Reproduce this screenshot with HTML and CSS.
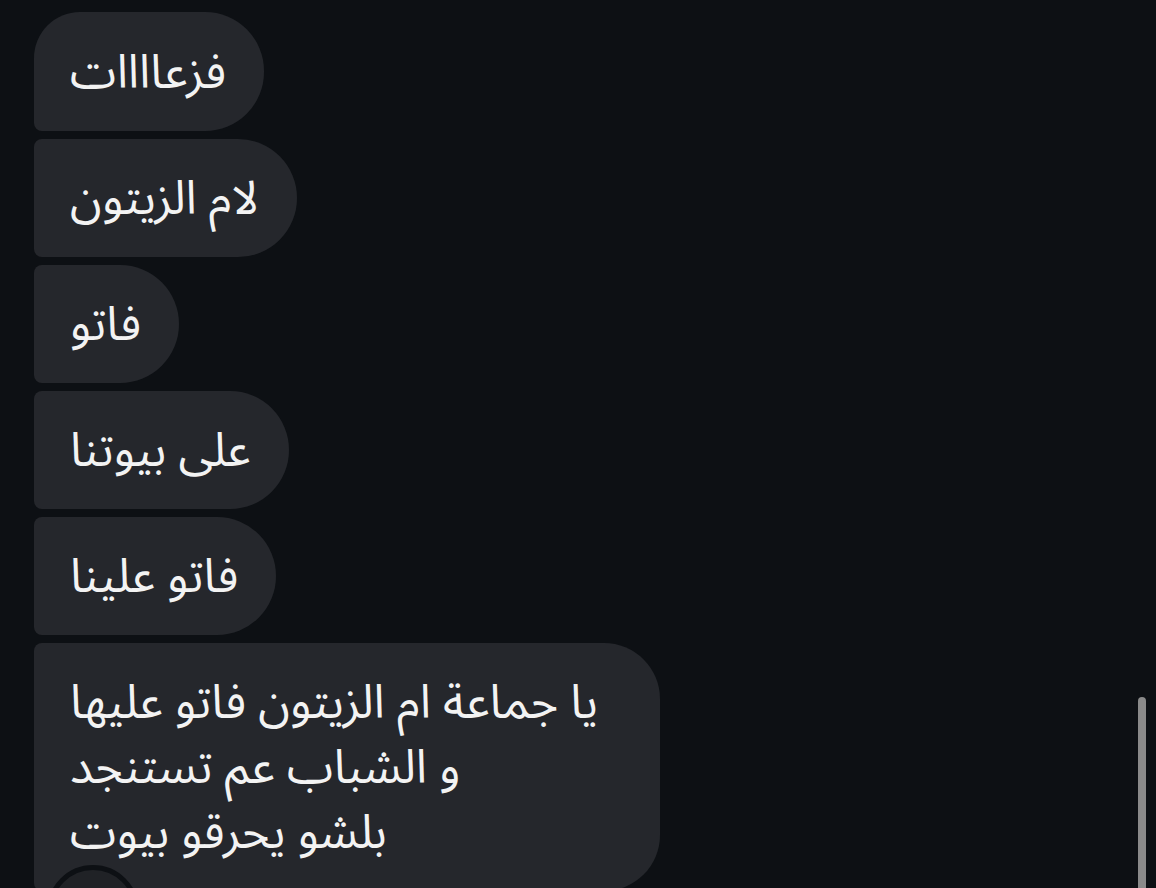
FILE: index.html
```html
<!DOCTYPE html>
<html lang="ar">
<head>
<meta charset="utf-8">
<link rel="stylesheet" href="styles.css">
</head>
<body>
<div class="thread">
  <div class="bubble first" dir="rtl">فزعاااات</div>
  <div class="bubble" dir="rtl">لام الزيتون</div>
  <div class="bubble" dir="rtl">فاتو</div>
  <div class="bubble" dir="rtl">على بيوتنا</div>
  <div class="bubble" dir="rtl">فاتو علينا</div>
  <div class="bubble multi" dir="rtl">يا جماعة ام الزيتون فاتو عليها<br>و الشباب عم تستنجد<br>بلشو يحرقو بيوت</div>
</div>
<div class="avatar"></div>
<div class="scrollbar"></div>
</body>
</html>
```
FILE: styles.css
```css
html, body {
  margin: 0;
  padding: 0;
  height: 100%;
  overflow: hidden;
  background: #0d1014;
}
body {
  position: relative;
  font-family: "Noto Sans Arabic", "Noto Sans Arabic UI", "DejaVu Sans", sans-serif;
}
.thread {
  display: flex;
  flex-direction: column;
  align-items: flex-start;
  gap: 8px;
  padding: 12px 0 0 34px;
}
.bubble {
  background: #25272c;
  color: #f3f3f3;
  font-size: 47px;
  line-height: 65px;
  padding: 28px 38px 25px 36px;
  border-radius: 8px 59px 59px 8px;
  text-align: left;
}
.bubble.first {
  border-top-left-radius: 46px;
  padding-top: 29px;
}
.bubble.multi {
  padding-right: 62px;
  border-radius: 8px 56px 56px 8px;
}
.avatar {
  position: absolute;
  left: 47px;
  top: 865px;
  width: 82px;
  height: 82px;
  border-radius: 50%;
  background: #202226;
  border: 5px solid #0d1014;
}
.scrollbar {
  position: absolute;
  left: 1138px;
  top: 697px;
  width: 8px;
  height: 200px;
  border-radius: 4px;
  background: #8a8a8a;
}
```
